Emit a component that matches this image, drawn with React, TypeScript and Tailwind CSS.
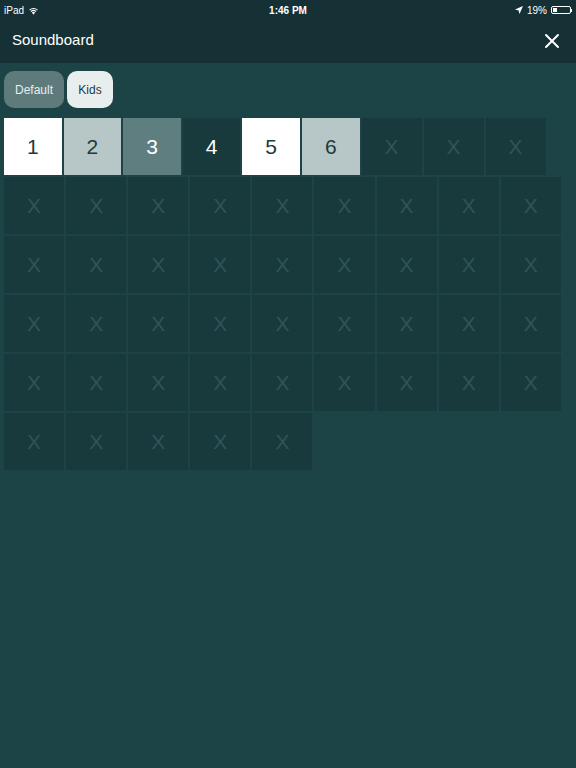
import React from "react";

const TOP = [
  { label: "1", cls: "w-[57.6px] bg-white text-[#1d3a3d]" },
  { label: "2", cls: "w-[57.6px] bg-[#b7c6c6] text-[#1d3a3d]" },
  { label: "3", cls: "w-[57.6px] bg-[#5f7e7f] text-white" },
  { label: "4", cls: "w-[57.6px] bg-[#183a3d] text-white" },
  { label: "5", cls: "w-[57.6px] bg-white text-[#1d3a3d]" },
  { label: "6", cls: "w-[57.6px] bg-[#b7c6c6] text-[#1d3a3d]" },
  { label: "X", cls: "w-[60px] bg-[#183a3d] text-[#2f5457]" },
  { label: "X", cls: "w-[60px] bg-[#183a3d] text-[#2f5457]" },
  { label: "X", cls: "w-[60px] bg-[#183a3d] text-[#2f5457]" },
];

const ROWS = [9, 9, 9, 9, 5];

function StatusBar() {
  return (
    <div className="relative flex h-5 items-center justify-between px-1 text-[10px] text-white">
      <div className="flex items-center gap-1">
        <span>iPad</span>
        <svg width="11" height="9" viewBox="0 0 12 9" fill="white">
          <path d="M6 9 L4.2 6.8 A2.6 2.6 0 0 1 7.8 6.8 Z" />
          <path d="M2.8 5.3 A4.6 4.6 0 0 1 9.2 5.3 L8.4 6.2 A3.4 3.4 0 0 0 3.6 6.2 Z" />
          <path d="M1.3 3.6 A6.8 6.8 0 0 1 10.7 3.6 L9.9 4.5 A5.6 5.6 0 0 0 2.1 4.5 Z" />
        </svg>
      </div>
      <span className="absolute left-1/2 -translate-x-1/2 font-semibold">1:46 PM</span>
      <div className="flex items-center gap-1">
        <svg width="8" height="8" viewBox="0 0 8 8" fill="white">
          <path d="M8 0 L0 3.5 L3.6 4.4 L4.5 8 Z" />
        </svg>
        <span>19%</span>
        <div className="flex items-center">
          <div className="flex h-[8px] w-[20px] items-center rounded-[2px] border border-white p-[1px]">
            <div className="h-full w-[4px] bg-white" />
          </div>
          <div className="h-[3px] w-[1px] bg-white" />
        </div>
      </div>
    </div>
  );
}

export default function App() {
  return (
    <div
      className="min-h-[768px] w-[576px] bg-[#1c4447]"
      style={{ fontFamily: '"Helvetica Neue", "Liberation Sans", Arial, sans-serif' }}
    >
      <div className="bg-[#163136]">
        <StatusBar />
        <div className="flex h-[43px] items-center justify-between pb-[2px] pl-3 pr-4">
          <span className="text-[15px] text-white">Soundboard</span>
          <svg width="16" height="16" viewBox="0 0 16 16" stroke="white" strokeWidth="2" strokeLinecap="round">
            <path d="M2 2 L14 14 M14 2 L2 14" />
          </svg>
        </div>
      </div>

      <div className="flex gap-[3px] px-1 pt-2">
        <button className="h-[37px] w-[60px] rounded-[10px] bg-[#5e7a7b] text-[12px] text-[#e8eeee]">
          Default
        </button>
        <button className="h-[37px] w-[46px] rounded-[10px] bg-[#e8eeee] text-[12px] text-[#1d3a3d]">
          Kids
        </button>
      </div>

      <div className="flex flex-col gap-[2px] px-1 pt-[10px]">
        <div className="flex gap-[2px]">
          {TOP.map((c, i) => (
            <div
              key={i}
              className={`flex h-[57px] items-center justify-center text-[21px] ${c.cls}`}
            >
              {c.label}
            </div>
          ))}
        </div>
        {ROWS.map((n, r) => (
          <div key={r} className="flex gap-[2px]">
            {Array.from({ length: n }).map((_, i) => (
              <div
                key={i}
                className="flex h-[57px] w-[60.1px] items-center justify-center bg-[#183a3d] text-[21px] text-[#2f5457]"
              >
                X
              </div>
            ))}
          </div>
        ))}
      </div>
    </div>
  );
}
